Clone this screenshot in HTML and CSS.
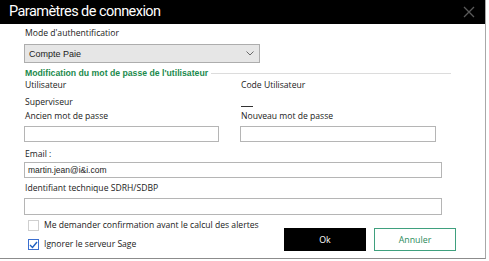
FILE: index.html
```html
<!DOCTYPE html>
<html lang="fr">
<head>
<meta charset="utf-8">
<title>Paramètres de connexion</title>
<link rel="stylesheet" href="styles.css">
</head>
<body>
<div class="dialog">
  <div class="titlebar">
    <span class="title">Paramètres de connexion</span>
    <svg class="close" width="12" height="12" viewBox="0 0 12 12"><path d="M1 1L11 11M11 1L1 11" stroke="#5a5a5a" stroke-width="1.3" fill="none"/></svg>
  </div>
  <div class="content">
    <div class="label mode">Mode d'authentificatior</div>
    <div class="select">
      <span>Compte Paie</span>
      <svg width="8" height="5" viewBox="0 0 8 5"><path d="M0.5 0.5L4 4L7.5 0.5" stroke="#6a6a6a" stroke-width="1" fill="none"/></svg>
    </div>
    <div class="group">
      <span class="group-title">Modification du mot de passe de l'utilisateur</span>
      <span class="group-line"></span>
    </div>
    <div class="two">
      <div class="label">Utilisateur</div>
      <div class="label">Code Utilisateur</div>
    </div>
    <div class="two r2">
      <div class="label">Superviseur</div>
      <div class="dash"></div>
    </div>
    <div class="two r3">
      <div class="label">Ancien mot de passe</div>
      <div class="label">Nouveau mot de passe</div>
    </div>
    <div class="two r4">
      <div class="input short"></div>
      <div class="input short2"></div>
    </div>
    <div class="label email">Email :</div>
    <div class="input wide"><span>martin.jean@i&amp;i.com</span></div>
    <div class="label ident">Identifiant technique SDRH/SDBP</div>
    <div class="input wide tall"></div>
    <div class="bottom">
      <div class="checks">
        <label class="check"><span class="box"></span><span class="label">Me demander confirmation avant le calcul des alertes</span></label>
        <label class="check"><span class="box checked"><svg width="9" height="8" viewBox="0 0 9 8"><path d="M1 4L3.5 6.5L8 1" stroke="#1f5fbf" stroke-width="1.4" fill="none"/></svg></span><span class="label">Ignorer le serveur Sage</span></label>
      </div>
      <div class="buttons">
        <div class="btn ok">Ok</div>
        <div class="btn cancel">Annuler</div>
      </div>
    </div>
  </div>
</div>
</body>
</html>
```
FILE: styles.css
```css
html, body {
  margin: 0;
  padding: 0;
  background: #ffffff;
}
.dialog {
  width: 485px;
  height: 258px;
  border-right: 1px solid #a8a8a8;
  border-bottom: 1px solid #8c8c8c;
  background: #fff;
  font-family: "Open Sans", "Noto Sans", sans-serif;
  color: #1a1a1a;
  box-sizing: content-box;
  display: flex;
  flex-direction: column;
}
.titlebar {
  height: 24px;
  background: #000;
  display: flex;
  align-items: center;
  justify-content: space-between;
  padding: 0 9px 0 9px;
  flex: none;
}
.title {
  color: #fff;
  font-family: Roboto, "Open Sans", sans-serif;
  font-size: 14.5px;
  line-height: 24px;
  letter-spacing: -0.55px;
}
.close {
  margin-right: 1px;
}
.content {
  padding-left: 24px;
  display: flex;
  flex-direction: column;
}
.label {
  font-size: 8.6px;
  line-height: 11px;
  color: #1a1a1a;
  white-space: nowrap;
}
.mode {
  margin-top: 4px;
  padding-left: 1px;
}
.select {
  margin-top: 5px;
  width: 225px;
  height: 17px;
  background: #e6e6e6;
  border: 1px solid #adadad;
  display: flex;
  align-items: center;
  justify-content: space-between;
  padding: 0 5px 0 4px;
  box-sizing: content-box;
  font-family: "Liberation Sans", Arial, sans-serif;
  font-size: 9px;
  color: #222;
}
.group {
  margin-top: 5px;
  display: flex;
  align-items: center;
  width: 426px;
  padding-left: 1px;
}
.group-title {
  font-family: "Liberation Sans", Arial, sans-serif;
  font-weight: bold;
  font-size: 8.7px;
  line-height: 11px;
  color: #1b8a4c;
  white-space: nowrap;
}
.group-line {
  flex: 1;
  height: 1px;
  background: #dcdcdc;
  margin-left: 3px;
}
.two {
  display: grid;
  grid-template-columns: 216px 1fr;
  padding-left: 1px;
  margin-top: 1px;
}
.r2 {
  margin-top: 6px;
}
.dash {
  width: 12px;
  height: 1px;
  background: #333;
  margin-top: 9px;
}
.r3 {
  margin-top: 3px;
}
.r4 {
  margin-top: 4px;
  padding-left: 0;
}
.input {
  height: 14px;
  border: 1px solid #b5b5b5;
  background: #fff;
  box-sizing: content-box;
}
.short {
  width: 193px;
}
.short2 {
  width: 194px;
}
.email {
  margin-top: 7px;
  padding-left: 1px;
}
.wide {
  width: 413px;
  margin-top: 2px;
  display: flex;
  align-items: center;
  padding-left: 3px;
  box-sizing: content-box;
}
.wide span {
  font-family: "Liberation Sans", Arial, sans-serif;
  font-size: 8.5px;
  color: #222;
}
.ident {
  margin-top: 5px;
  padding-left: 1px;
}
.tall {
  height: 15px;
  margin-top: 4px;
}
.bottom {
  display: flex;
  margin-top: 5px;
}
.checks {
  width: 256px;
  display: flex;
  flex-direction: column;
  gap: 8px;
  padding-left: 4px;
}
.check {
  display: flex;
  align-items: center;
  gap: 5px;
}
.box {
  width: 9px;
  height: 9px;
  border: 1px solid #cfcfcf;
  background: #fff;
  display: flex;
  align-items: center;
  justify-content: center;
}
.box.checked {
  border-color: #3b6fd0;
}
.buttons {
  display: flex;
  gap: 8px;
  margin-top: 8px;
}
.btn {
  width: 82px;
  height: 23px;
  box-sizing: border-box;
  display: flex;
  align-items: center;
  justify-content: center;
  font-size: 8.8px;
}
.ok {
  background: #000;
  color: #fff;
}
.cancel {
  border: 1px solid #3fa07e;
  color: #2a8a5a;
  background: #fff;
}
```
